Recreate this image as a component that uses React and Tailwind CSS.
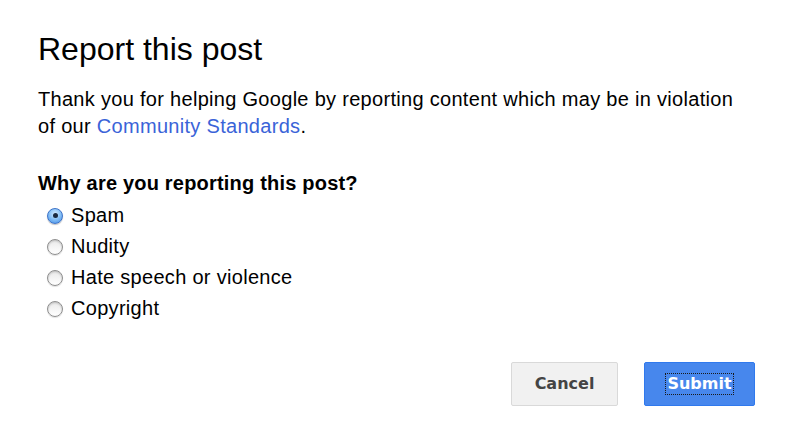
import React, { useState } from "react";

function Radio({ checked }) {
  if (checked) {
    return (
      <span className="relative flex h-[16px] w-[16px] shrink-0 items-center justify-center rounded-full border border-[#3d73c8] bg-[radial-gradient(circle_at_50%_35%,#d6ecff_0%,#8cc4f7_45%,#3f8ae6_100%)] shadow-[0_1px_1px_rgba(0,0,0,0.25)]">
        <span className="h-[5px] w-[5px] rounded-full bg-[#1a2a3f]" />
      </span>
    );
  }
  return (
    <span className="h-[16px] w-[16px] shrink-0 rounded-full border border-[#8e8e8e] bg-[linear-gradient(#e9e9e9,#ffffff)] shadow-[inset_0_1px_2px_rgba(0,0,0,0.2),0_1px_1px_rgba(0,0,0,0.12)]" />
  );
}

export default function App() {
  const [sel, setSel] = useState("Spam");
  const options = ["Spam", "Nudity", "Hate speech or violence", "Copyright"];
  return (
    <div
      className="flex h-[447px] w-[800px] flex-col bg-white pl-[38px] pt-[29px] text-black"
      style={{ fontFamily: '"Liberation Sans", Arial, sans-serif' }}
    >
      <h1 className="text-[32px] leading-[40px] font-normal">Report this post</h1>
      <p className="mt-[17px] text-[20px] leading-[27px] tracking-[0.3px]">
        Thank you for helping Google by reporting content which may be in violation
        <br />
        of our <span className="text-[#3a63d8]">Community Standards</span>.
      </p>
      <div className="mt-[30px] text-[20px] font-bold leading-[27px] tracking-[0.2px]">
        Why are you reporting this post?
      </div>
      <div className="mt-[3px] flex flex-col">
        {options.map((o) => (
          <label
            key={o}
            className="flex h-[31px] items-center gap-[8px] pl-[9px] text-[20px] leading-[27px] tracking-[0.3px]"
            onClick={() => setSel(o)}
          >
            <Radio checked={sel === o} />
            <span>{o}</span>
          </label>
        ))}
      </div>
      <div className="mt-[38px] flex justify-end gap-[26px] pr-[45px]">
        <button
          className="flex h-[44px] w-[107px] items-center justify-center rounded-[2px] border border-[#d9d9d9] bg-[#f1f1f1] text-[16px] font-bold text-[#444]"
          style={{ fontFamily: '"DejaVu Sans", Verdana, sans-serif' }}
        >
          Cancel
        </button>
        <button
          className="flex h-[44px] w-[111px] items-center justify-center rounded-[2px] border border-[#3079ed] bg-[#4787ed] text-[16px] font-bold text-white"
          style={{ fontFamily: '"DejaVu Sans", Verdana, sans-serif' }}
        >
          <span className="border border-dotted border-[#1a1a1a] px-[1px] leading-[20px]">Submit</span>
        </button>
      </div>
    </div>
  );
}
